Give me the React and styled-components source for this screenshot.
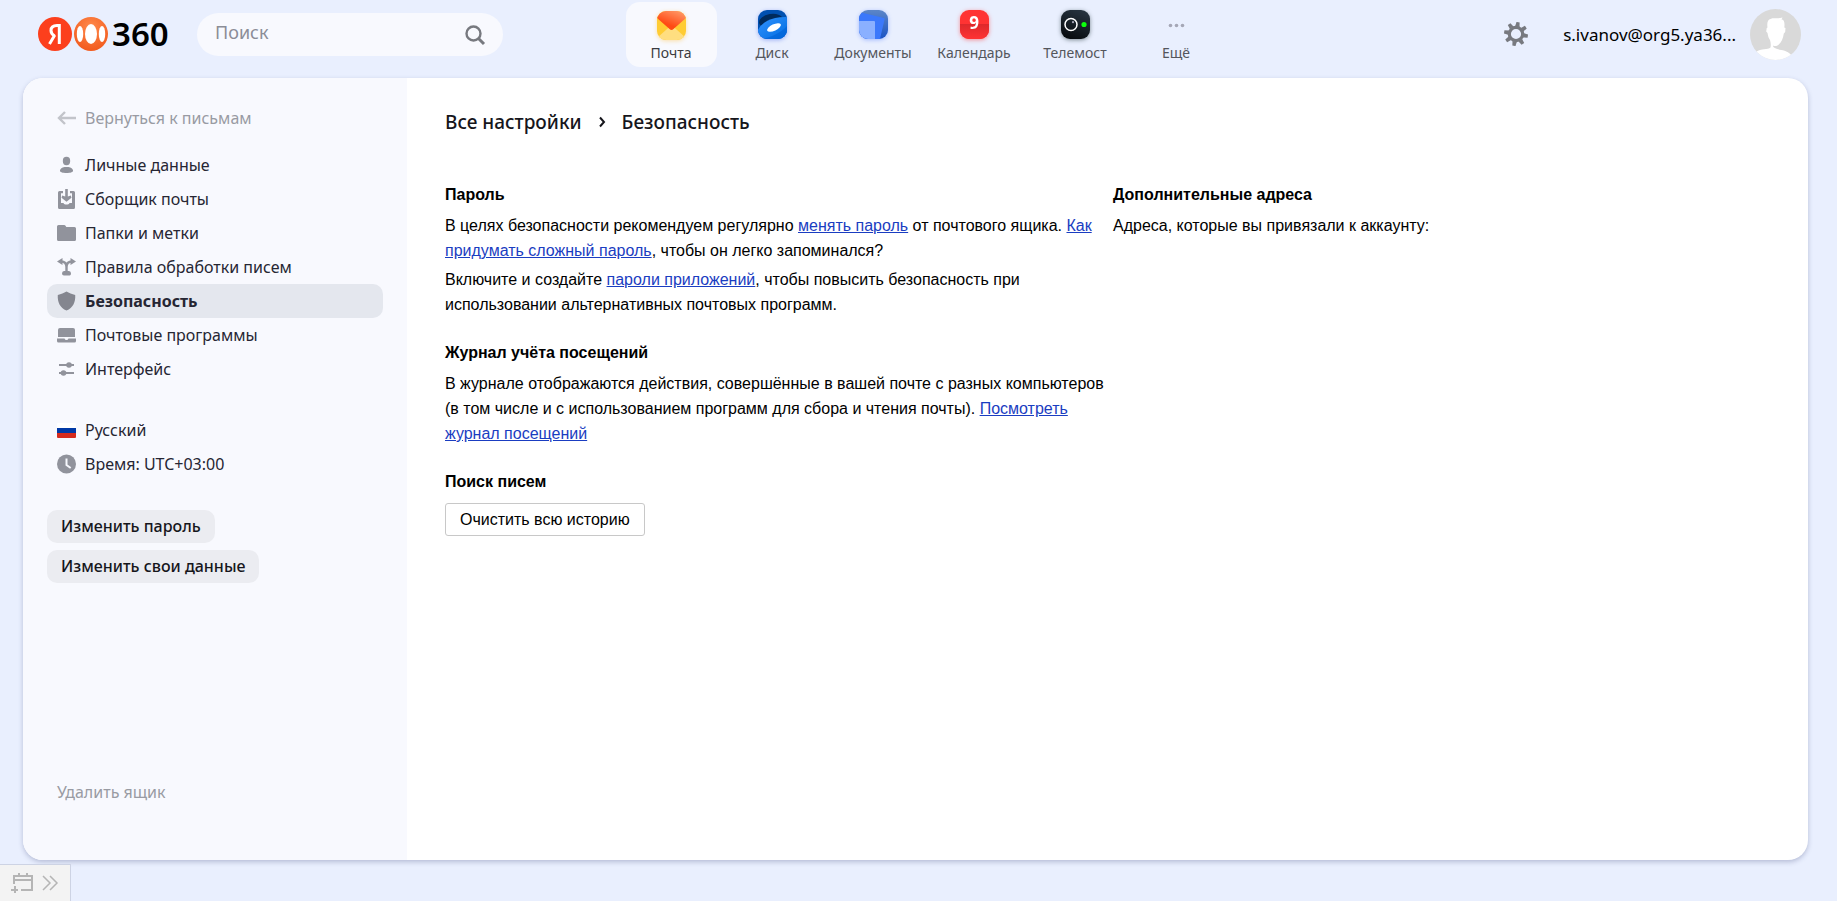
import React from 'react';
import styled, { createGlobalStyle } from 'styled-components';

const GlobalStyle = createGlobalStyle`
  *, *::before, *::after { box-sizing: border-box; }
  body {
    margin: 0;
    background: #e9effe;
    color: #000;
    font-family: 'Noto Sans', 'Open Sans', sans-serif;
  }
  h1, h2, p, ul { margin: 0; padding: 0; }
  ul { list-style: none; }
  button, input { font: inherit; color: inherit; }
  svg { display: block; flex: none; }
`;

const Page = styled.div`
  display: flex;
  flex-direction: column;
  min-height: 100vh;
`;

const Header = styled.header`
  display: grid;
  grid-template-columns: 1fr auto 1fr;
  height: 78px;
  padding: 0 36px 0 38px;
`;

const HeaderStart = styled.div`
  display: flex;
  align-items: flex-start;
`;

const Logo = styled.a`
  display: flex;
  align-items: center;
  gap: 2px;
  width: 159px;
  height: 68px;
  color: #000;
  text-decoration: none;
`;

const LogoNumber = styled.span`
  margin-left: 2px;
  font-size: 33px;
  font-weight: 600;
  line-height: 34px;
`;

const SearchForm = styled.form`
  display: flex;
  align-items: center;
  width: 306px;
  height: 43px;
  margin-top: 13px;
  padding: 0 16px 0 18px;
  border-radius: 22px;
  background: #f8f9fe;
`;

const SearchInput = styled.input`
  flex: 1;
  min-width: 0;
  height: 38px;
  margin-bottom: 5px;
  padding: 0;
  border: 0;
  outline: 0;
  background: transparent;
  font-size: 18px;
  &::placeholder { color: #8b8d97; opacity: 1; }
`;

const IconButton = styled.button`
  display: flex;
  align-items: center;
  justify-content: center;
  padding: 0;
  border: 0;
  background: transparent;
  color: #77797f;
  cursor: pointer;
`;

const Services = styled.nav`
  display: flex;
  gap: 10px;
  margin: 2px 0 0 8px;
`;

const Service = styled.a`
  display: flex;
  flex-direction: column;
  align-items: center;
  width: 91px;
  height: 65px;
  padding-top: 4px;
  border-radius: 14px;
  background: ${(p) => (p.$active ? '#f8f9fe' : 'transparent')};
  color: ${(p) => (p.$active ? '#3a3b40' : '#54565c')};
  font-size: 14px;
  line-height: 20px;
  text-decoration: none;
`;

const HeaderEnd = styled.div`
  display: flex;
  align-items: center;
  justify-content: flex-end;
  height: 68px;
`;

const Account = styled.a`
  display: flex;
  align-items: center;
  gap: 14px;
  margin-left: 35px;
  color: #000;
  font-size: 17px;
  text-decoration: none;
`;

const Card = styled.div`
  display: flex;
  flex: 1;
  margin: 0 29px 0 23px;
  border-radius: 20px;
  overflow: hidden;
  background: #fff;
  box-shadow: 0 2px 5px rgba(70, 80, 130, 0.32);
`;

const Sidebar = styled.aside`
  display: flex;
  flex-direction: column;
  flex: none;
  width: 384px;
  padding: 23px 24px 51px;
  background: #f8f9fe;
`;

const SideList = styled.ul`
  margin-top: ${(p) => p.$gap}px;
`;

const SideLink = styled.a`
  display: flex;
  align-items: center;
  gap: 9px;
  height: 34px;
  padding: 0 10px;
  border-radius: 10px;
  background: ${(p) => (p.$active ? '#e4e7ee' : 'transparent')};
  color: ${(p) => (p.$muted ? '#999ba3' : '#262633')};
  font-size: 16px;
  font-weight: ${(p) => (p.$active ? 700 : 400)};
  text-decoration: none;
  & svg { color: ${(p) => (p.$muted ? '#c2c4ca' : p.$active ? '#84868f' : '#91939c')}; }
`;

const SideActions = styled.div`
  display: flex;
  flex-direction: column;
  align-items: flex-start;
  gap: 7px;
  margin: 29px 0 auto;
`;

const SideButton = styled.button`
  height: 33px;
  padding: 0 14px 2px;
  border: 0;
  border-radius: 10px;
  background: #ebecf1;
  color: #16161c;
  font-size: 16px;
  font-weight: 500;
  cursor: pointer;
`;

const Content = styled.main`
  flex: 1;
  min-width: 0;
  padding: 32px 38px;
`;

const Breadcrumbs = styled.nav`
  display: flex;
  align-items: center;
  gap: 16px;
  height: 24px;
  color: #16161c;
  font-size: 19px;
  font-weight: 500;
`;

const Crumb = styled.a`
  color: inherit;
  text-decoration: none;
`;

const CrumbTitle = styled.h1`
  font-size: inherit;
  font-weight: inherit;
`;

const Columns = styled.div`
  display: grid;
  grid-template-columns: 662px 1fr;
  column-gap: 6px;
  margin-top: 48px;
  font-family: 'Liberation Sans', Arial, sans-serif;
  font-size: 16px;
  line-height: 25px;
`;

const Column = styled.div`
  display: flex;
  flex-direction: column;
  gap: 23px;
`;

const Heading = styled.h2`
  margin-bottom: 6px;
  font-size: 16px;
  font-weight: 700;
`;

const Paragraph = styled.p`
  & + & { margin-top: 4px; }
`;

const TextLink = styled.a`
  color: #1a3dc1;
  text-decoration: underline;
`;

const OutlineButton = styled.button`
  display: block;
  height: 33px;
  margin-top: 9px;
  padding: 0 14px;
  border: 1px solid #c8c8c8;
  border-radius: 3px;
  background: #fff;
  cursor: pointer;
`;

const Dock = styled.footer`
  display: flex;
  align-self: flex-start;
  align-items: center;
  gap: 8px;
  width: 71px;
  height: 37px;
  margin-top: 4px;
  padding-left: 11px;
  border: solid #cdd3e4;
  border-width: 1px 1px 0 0;
  background: #f3f3f3;
`;

function LogoMark() {
  return (
    <svg width="70" height="34" viewBox="0 0 70 34" aria-hidden="true">
      <defs>
        <radialGradient id="orb" cx=".5" cy=".3" r=".7">
          <stop offset="0" stopColor="#ff8a4c" />
          <stop offset="1" stopColor="#f25a1d" />
        </radialGradient>
      </defs>
      <circle cx="17" cy="17" r="17" fill="#fc3f1d" />
      <path d="M21.300 8.500H19c-3.800 0-6 2-6 5 0 2.700 1.300 4 3.500 5.500M21.300 7v20M16.800 18l-5.300 9" fill="none" stroke="#fff" strokeWidth="3" />
      <circle cx="53" cy="17" r="17" fill="url(#orb)" />
      <ellipse cx="53" cy="17" rx="6" ry="10" fill="#fff" />
      <ellipse cx="42" cy="17" rx="3.200" ry="8" fill="#fff" />
      <ellipse cx="64" cy="17" rx="3.200" ry="8" fill="#fff" />
    </svg>
  );
}

const MagnifierIcon = () => (
  <svg width="24" height="24" viewBox="0 0 24 24" fill="none" stroke="currentColor" strokeWidth="2.400">
    <circle cx="10.500" cy="10.500" r="7" />
    <path d="M15.500 15.500l5.500 5.500" strokeWidth="3" />
  </svg>
);

const GearIcon = () => (
  <svg width="24" height="24" viewBox="-12 -12 24 24" fill="none" stroke="currentColor">
    <circle r="6.700" strokeWidth="3.200" />
    {[10, 55, 100, 145, 190, 235, 280, 325].map((a) => (
      <path key={a} d="M-2.200-7.500L-1.600-12h3.200l.6 4.500z" fill="currentColor" stroke="none" transform={`rotate(${a})`} />
    ))}
  </svg>
);

const AvatarIcon = () => (
  <svg width="51" height="51" viewBox="0 0 51 51" role="img" aria-label="Аккаунт">
    <defs><clipPath id="avatar"><circle cx="25.500" cy="25.500" r="25.500" /></clipPath></defs>
    <g clipPath="url(#avatar)">
      <path fill="#d9d9d9" d="M0 0h51v51H0z" />
      <path fill="#fff" d="M17.500 24l-1.300-1.500.5-3.500.8-.5c-.8-5 .5-8 3-8.500 3-1.500 7 .2 12-1.500l-1 2c2.500 0 3.500 3 2.800 8l1.200.5-.3 4-1.400 1.500c-.7 5-2.300 8.500-5 11-2 1.800-4 2-5.800 1l.3 1.500c5 4 12 1.500 18 8v7H6v-10c5-4 12-2 14.500-4.500.5-2 .3-5-.5-7.500-1.500-2-2-4-2.500-7z" />
    </g>
  </svg>
);

const ServiceFrame = styled.svg`
  overflow: visible;
  filter: ${(p) => (p.$glow ? `drop-shadow(0 1px 2px ${p.$glow})` : 'none')};
`;

const MailLogo = () => (
  <ServiceFrame width="37" height="37" viewBox="-4 -5 37 37" $glow="rgba(255,190,60,.45)">
    <defs>
      <clipPath id="tile"><rect width="29" height="29" rx="9" /></clipPath>
      <linearGradient id="flap" x1="1" y1="0" x2=".4" y2="1"><stop stopColor="#ffa270" /><stop offset=".8" stopColor="#ff4a14" /></linearGradient>
    </defs>
    <g clipPath="url(#tile)">
      <path fill="#ffcc33" d="M0 0h29v29H0z" />
      <path fill="#ffde80" d="M14.500 14L-1 28v2h31v-2z" />
      <path fill="url(#flap)" d="M0 0h29v7L16.500 18q-2 1.800-4 0L0 7z" />
    </g>
  </ServiceFrame>
);

const DiskLogo = () => (
  <ServiceFrame width="37" height="37" viewBox="-4 -4 37 37" $glow="rgba(40,80,230,.4)">
    <defs><linearGradient id="saucer" x1="0" y1="0" x2="1" y2="1"><stop stopColor="#3294ff" /><stop offset="1" stopColor="#006be0" /></linearGradient></defs>
    <g clipPath="url(#tile)">
      <path fill="#0050b0" d="M0 0h29v29H0z" />
      <ellipse cx="13" cy="11" rx="12" ry="7" fill="#002b5c" transform="rotate(-10 13 11)" />
      <path d="M-1 23C1 14 12 6 30 7v22H0z" fill="url(#saucer)" />
      <path d="M3 29c10-1 20-6 27-14v15z" fill="#0060d6" opacity=".6" />
      <ellipse cx="16" cy="17.500" rx="7.500" ry="3.200" fill="#fff" transform="rotate(-25 16 17.500)" />
    </g>
  </ServiceFrame>
);

const DocsLogo = () => (
  <ServiceFrame width="37" height="37" viewBox="-4 -4 37 37" $glow="rgba(60,110,255,.4)">
    <defs><linearGradient id="docs" x1="1" y1="0" x2="1" y2="1"><stop stopColor="#5c86c8" /><stop offset="1" stopColor="#1a53c4" /></linearGradient></defs>
    <g clipPath="url(#tile)">
      <path fill="url(#docs)" d="M0 0h29v29H0z" />
      <path fill="#3b78fb" d="M0 2l25 6q.8.300.600 1.200L21 29H0z" />
      <path fill="#8ab0ff" d="M0 11h15q1 0 1 1v17H0z" />
    </g>
  </ServiceFrame>
);

const CalendarLogo = () => (
  <ServiceFrame width="37" height="37" viewBox="-4 -4 37 37" $glow="rgba(255,50,50,.5)">
    <defs><linearGradient id="cal" x1="0" y1="0" x2="0" y2="1"><stop stopColor="#dd292c" /><stop offset="1" stopColor="#ff3333" /></linearGradient></defs>
    <g clipPath="url(#tile)">
      <path fill="#ff3333" d="M0 0h29v29H0z" />
      <path fill="url(#cal)" d="M0 14h29v15H0z" />
    </g>
    <text x="14" y="19" textAnchor="middle" fill="#fff" fontSize="17" fontWeight="700">9</text>
  </ServiceFrame>
);

const TelemostLogo = () => (
  <ServiceFrame width="37" height="37" viewBox="-4 -4 37 37" $glow="rgba(20,40,40,.5)">
    <defs><linearGradient id="tele" x1=".7" y1="0" x2=".3" y2="1"><stop stopColor="#26333f" /><stop offset="1" stopColor="#080b0e" /></linearGradient></defs>
    <rect width="29" height="29" rx="9" fill="url(#tele)" />
    <circle cx="10" cy="14.500" r="6" fill="none" stroke="#fff" strokeWidth="1.500" />
    <circle cx="12" cy="12.200" r="1.100" fill="#aab" />
    <circle cx="23" cy="14.500" r="2.600" fill="#0cff0c" />
  </ServiceFrame>
);

const MoreLogo = () => (
  <ServiceFrame width="37" height="37" viewBox="-4 -4 37 37" fill="#a5a7b6">
    <circle cx="8.500" cy="15.500" r="1.800" />
    <circle cx="14.500" cy="15.500" r="1.800" />
    <circle cx="20.500" cy="15.500" r="1.800" />
  </ServiceFrame>
);

const SideIcon = ({ children }) => (
  <svg width="19" height="20" viewBox="0 0 19 20" fill="currentColor" aria-hidden="true">{children}</svg>
);

const icons = {
  back: <path d="M8 4L2 10l6 6M2 10h17" fill="none" stroke="currentColor" strokeWidth="2.400" />,
  person: (
    <>
      <ellipse cx="9.500" cy="6" rx="3.700" ry="4.200" />
      <path d="M3 15.200C4 12.500 7 12 9.500 12s5.500.5 6.500 3.200c.5 1.800-2.500 2.800-6.500 2.800S2.500 17 3 15.200z" />
    </>
  ),
  collector: (
    <path fillRule="evenodd" d="M8.200 0h2.600v7.500l3-1 .7 2.200-5 4-5-4 .7-2.200 3 1zM2.500 2H6v2.300H4V14h2.500c.5 2 5.500 2 6 0H15V4.300h-2V2h3.500Q18 2 18 3.500v15q0 1.500-1.500 1.500h-14Q1 20 1 18.500v-15Q1 2 2.500 2z" />
  ),
  folder: <path d="M1.500 2H7q1.200 0 1.700 1l.6 1H17.500Q19 4 19 5.500v11q0 1.500-1.500 1.500h-16Q0 18 0 16.500v-13Q0 2 1.500 2z" />,
  rules: (
    <>
      <path d="M4 4.500c4 0 5.500 2 5.500 5.500 0-3.500 1.500-5.500 5.500-5.500M9.500 9v7" fill="none" stroke="currentColor" strokeWidth="2.400" />
      <path d="M0 4.500L5.500 1v7zM19 4.500L13.500 1v7z" />
      <path d="M5 16.500Q5 14 7 14h5q2 0 2 2.500T12 18.500H7q-2 0-2-2z" />
    </>
  ),
  shield: <path d="M9.500.5C12 2 15 3 18.200 4c.5 7-2.200 13-8.700 15.500C3 17 .3 11 .8 4 4 3 7 2 9.500.5z" />,
  programs: (
    <>
      <path d="M1 12V5q0-2 2-2h13q2 0 2 2v7z" />
      <path d="M0 13.500h7.500q.5 1.500 2 1.500t2-1.500H19V16q0 1.500-1.500 1.500h-16Q0 17.500 0 16z" />
    </>
  ),
  sliders: (
    <>
      <path d="M2 6h15M2 14h15" stroke="currentColor" strokeWidth="2" />
      <circle cx="12" cy="6" r="2.800" />
      <circle cx="6.500" cy="14" r="2.800" />
    </>
  ),
  flag: (
    <>
      <path fill="#fff" d="M0 4q0-1 1-1h17q1 0 1 1v4H0z" />
      <path fill="#0039a6" d="M0 8h19v5H0z" />
      <path fill="#d52b1e" d="M0 13h19v4q0 1-1 1H1q-1 0-1-1z" />
    </>
  ),
  clock: (
    <>
      <circle cx="9.500" cy="10" r="9.500" />
      <path d="M9.500 4.500V11l4.200 3" fill="none" stroke="#f8f9fe" strokeWidth="2" />
    </>
  ),
};

const services = [
  { label: 'Почта', Logo: MailLogo, active: true },
  { label: 'Диск', Logo: DiskLogo },
  { label: 'Документы', Logo: DocsLogo },
  { label: 'Календарь', Logo: CalendarLogo },
  { label: 'Телемост', Logo: TelemostLogo },
  { label: 'Ещё', Logo: MoreLogo },
];

const sections = [
  { label: 'Личные данные', icon: 'person' },
  { label: 'Сборщик почты', icon: 'collector' },
  { label: 'Папки и метки', icon: 'folder' },
  { label: 'Правила обработки писем', icon: 'rules' },
  { label: 'Безопасность', icon: 'shield', active: true },
  { label: 'Почтовые программы', icon: 'programs' },
  { label: 'Интерфейс', icon: 'sliders' },
];

const locale = [
  { label: 'Русский', icon: 'flag' },
  { label: 'Время: UTC+03:00', icon: 'clock' },
];

function SideItems({ items, gap }) {
  return (
    <SideList $gap={gap}>
      {items.map(({ label, icon, active }) => (
        <li key={label}>
          <SideLink href="#" $active={active}>
            <SideIcon>{icons[icon]}</SideIcon>
            {label}
          </SideLink>
        </li>
      ))}
    </SideList>
  );
}

export default function App() {
  return (
    <Page>
      <GlobalStyle />
      <Header>
        <HeaderStart>
          <Logo href="#">
            <LogoMark />
            <LogoNumber>360</LogoNumber>
          </Logo>
          <SearchForm role="search">
            <SearchInput type="text" placeholder="Поиск" aria-label="Поиск" />
            <IconButton type="button" aria-label="Найти"><MagnifierIcon /></IconButton>
          </SearchForm>
        </HeaderStart>
        <Services>
          {services.map(({ label, Logo: ServiceLogo, active }) => (
            <Service key={label} href="#" $active={active}>
              <ServiceLogo />
              {label}
            </Service>
          ))}
        </Services>
        <HeaderEnd>
          <IconButton type="button" aria-label="Настройки"><GearIcon /></IconButton>
          <Account href="#">
            s.ivanov@org5.ya36...
            <AvatarIcon />
          </Account>
        </HeaderEnd>
      </Header>
      <Card>
        <Sidebar>
          <SideLink href="#" $muted>
            <SideIcon>{icons.back}</SideIcon>
            Вернуться к письмам
          </SideLink>
          <SideItems items={sections} gap={13} />
          <SideItems items={locale} gap={27} />
          <SideActions>
            <SideButton type="button">Изменить пароль</SideButton>
            <SideButton type="button">Изменить свои данные</SideButton>
          </SideActions>
          <SideLink href="#" $muted>Удалить ящик</SideLink>
        </Sidebar>
        <Content>
          <Breadcrumbs>
            <Crumb href="#">Все настройки</Crumb>
            <svg width="8" height="12" viewBox="0 0 8 12" fill="none" stroke="currentColor" strokeWidth="2">
              <path d="M2 1.500L6 6l-4 4.500" />
            </svg>
            <CrumbTitle>Безопасность</CrumbTitle>
          </Breadcrumbs>
          <Columns>
            <Column>
              <section>
                <Heading>Пароль</Heading>
                <Paragraph>
                  В целях безопасности рекомендуем регулярно <TextLink href="#">менять пароль</TextLink> от почтового
                  ящика. <TextLink href="#">Как придумать сложный пароль</TextLink>, чтобы он легко запоминался?
                </Paragraph>
                <Paragraph>
                  Включите и создайте <TextLink href="#">пароли приложений</TextLink>, чтобы повысить безопасность при
                  использовании альтернативных почтовых программ.
                </Paragraph>
              </section>
              <section>
                <Heading>Журнал учёта посещений</Heading>
                <Paragraph>
                  В журнале отображаются действия, совершённые в вашей почте с разных компьютеров (в том числе и с
                  использованием программ для сбора и чтения почты). <TextLink href="#">Посмотреть журнал посещений</TextLink>
                </Paragraph>
              </section>
              <section>
                <Heading>Поиск писем</Heading>
                <OutlineButton type="button">Очистить всю историю</OutlineButton>
              </section>
            </Column>
            <Column>
              <section>
                <Heading>Дополнительные адреса</Heading>
                <Paragraph>Адреса, которые вы привязали к аккаунту:</Paragraph>
              </section>
            </Column>
          </Columns>
        </Content>
      </Card>
      <Dock>
        <IconButton type="button" aria-label="Добавить событие">
          <svg width="22" height="22" viewBox="0 0 22 22" fill="none" stroke="#b5b5b5" strokeWidth="2">
            <path d="M3 12V4h18v14H10M3 8h18M8 1v3M16 1v3M4 14v7M0 18h7" />
          </svg>
        </IconButton>
        <IconButton type="button" aria-label="Развернуть">
          <svg width="18" height="18" viewBox="0 0 18 18" fill="none" stroke="#b5b5b5" strokeWidth="1.500">
            <path d="M2 2l7 7-7 7M9 2l7 7-7 7" />
          </svg>
        </IconButton>
      </Dock>
    </Page>
  );
}
